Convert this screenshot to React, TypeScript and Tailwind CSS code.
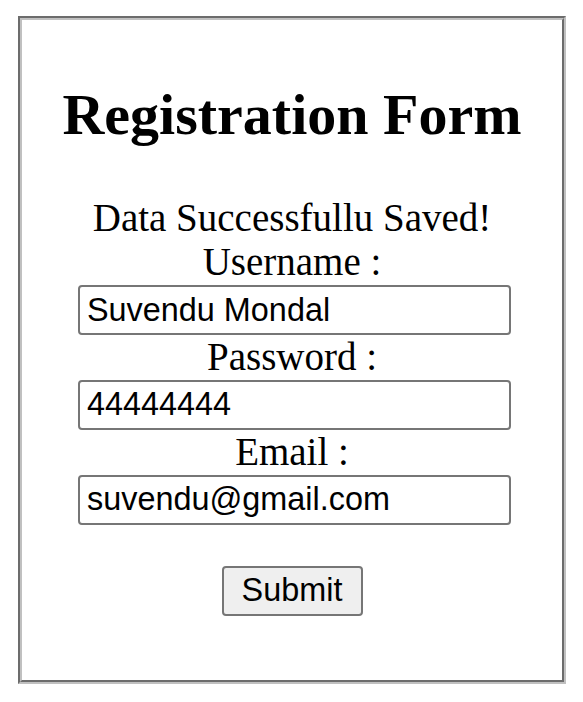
import React from "react";

export default function App() {
  const serif = { fontFamily: '"Liberation Serif", "Times New Roman", serif' };
  const inputCls =
    "ml-[5px] w-[433px] h-[50px] border-2 border-[#767676] rounded-[4px] px-[7px] text-[32.4px] text-black bg-white outline-none font-['Liberation_Sans',Arial,sans-serif]";
  const labelCls = "text-[39px] leading-[44.8px] text-black font-['Liberation_Serif','Times_New_Roman',serif]";
  return (
    <div className="bg-white w-[583px] h-[702px] pt-[16px] pl-[18px]">
      <div className="w-[548px] h-[668px] border-4 border-[#c0c0c0] [border-style:groove] flex flex-col items-center">
        <h1
          className="mt-[62px] mb-[47px] text-[58px] leading-[66.6px] font-bold text-black font-['Liberation_Serif','Times_New_Roman',serif]"
          style={serif}
        >
          Registration Form
        </h1>
        <div className={labelCls}>Data Successfullu Saved!</div>
        <div className={labelCls}>Username :</div>
        <input className={inputCls} value="Suvendu Mondal" readOnly />
        <div className={labelCls}>Password :</div>
        <input className={inputCls} value="44444444" readOnly />
        <div className={labelCls}>Email :</div>
        <input className={inputCls} value="suvendu@gmail.com" readOnly />
        <button className="mt-[41px] w-[141px] h-[50px] border-2 border-[#767676] rounded-[4px] bg-[#efefef] text-[32.4px] text-black font-['Liberation_Sans',Arial,sans-serif] flex items-center justify-center">
          Submit
        </button>
      </div>
    </div>
  );
}
